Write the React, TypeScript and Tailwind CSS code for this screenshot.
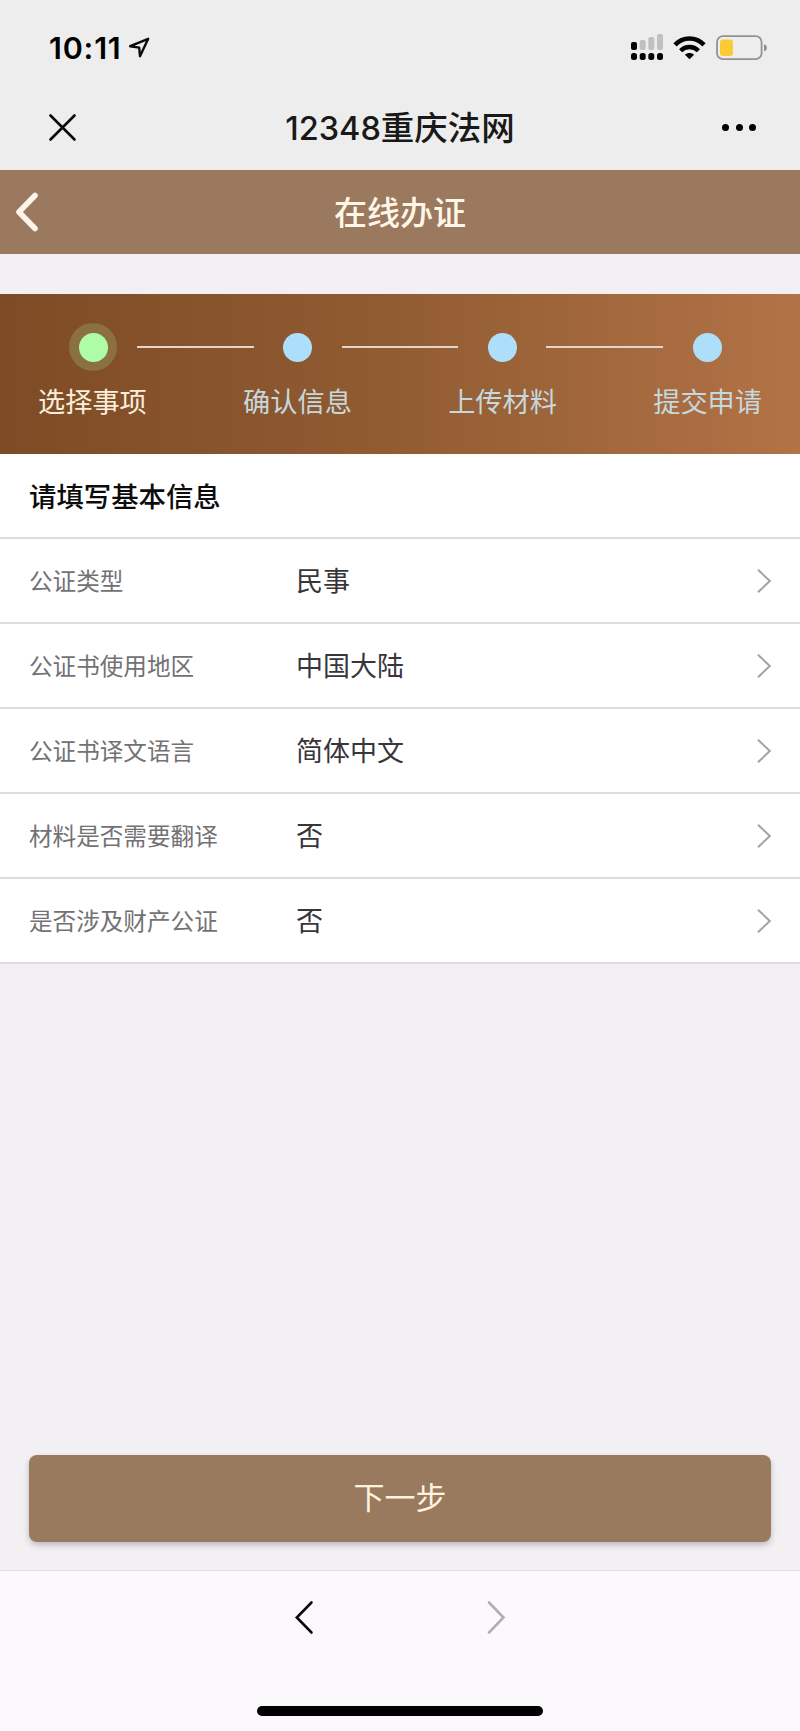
import React from 'react';

interface FormRowProps {
  label: string;
  value: string;
}

const steps = ['选择事项', '确认信息', '上传材料', '提交申请'];

const rows: FormRowProps[] = [
  { label: '公证类型', value: '民事' },
  { label: '公证书使用地区', value: '中国大陆' },
  { label: '公证书译文语言', value: '简体中文' },
  { label: '材料是否需要翻译', value: '否' },
  { label: '是否涉及财产公证', value: '否' },
];

function StatusBar() {
  return (
    <div className="flex h-[85px] items-center justify-between pl-[49px] pr-[32px]">
      <div className="flex items-center pt-[11px]">
        <span className="w-[74px] whitespace-nowrap text-[30.5px] leading-none font-semibold tracking-[0.8px] text-black">10:11</span>
        <svg className="ml-[5px]" width="22" height="22" viewBox="0 0 22 22" fill="none">
          <path d="M20.200 1.800 2.200 9.200l9 1.400.8 8.600z" stroke="#0a0a0a" strokeWidth="2.400" strokeLinejoin="round" />
        </svg>
      </div>
      <div className="flex items-center pt-[8px]">
        {/* dual sim signal */}
        <svg width="33" height="28" viewBox="0 0 33 28">
          <rect x="0" y="9" width="6" height="8" rx="2" fill="#050505" />
          <rect x="8.7" y="7" width="6" height="10" rx="2" fill="#c0c0c0" />
          <rect x="17.3" y="4" width="6" height="13" rx="2" fill="#c0c0c0" />
          <rect x="26" y="1" width="6" height="16" rx="2" fill="#c0c0c0" />
          <rect x="0" y="20" width="6" height="7" rx="2.5" fill="#050505" />
          <rect x="8.7" y="20" width="6" height="7" rx="2.5" fill="#050505" />
          <rect x="17.3" y="20" width="6" height="7" rx="2.5" fill="#050505" />
          <rect x="26" y="20" width="6" height="7" rx="2.5" fill="#050505" />
        </svg>
        <svg className="mt-[2px] ml-[9px]" width="33" height="24" viewBox="0 0 33 24" fill="none">
          <path d="M2 8.8C10 .4 23 .4 31 8.8" stroke="#050505" strokeWidth="4.6" />
          <path d="M7.6 14.8c5-5 12.800-5 17.800 0" stroke="#050505" strokeWidth="4.4" />
          <path d="M16.500 23.200l-4.600-4.400c2.600-2.300 6.600-2.300 9.200 0z" fill="#050505" />
        </svg>
        <svg className="mt-[2px] ml-[10px]" width="52" height="26" viewBox="0 0 52 26" fill="none">
          <rect x="1" y="1.200" width="44.600" height="23" rx="6" stroke="#929292" strokeWidth="1.800" />
          <rect x="4" y="4.500" width="13" height="16.500" rx="3" fill="#fbca35" />
          <path d="M48 9.200c3.800.8 3.800 6.200 0 7z" fill="#8c8c8c" />
        </svg>
      </div>
    </div>
  );
}

function NavBar() {
  return (
    <div className="flex h-[85px] items-center justify-between pl-[48px] pr-[44px]">
      <svg width="30" height="30" viewBox="0 0 30 30" fill="none">
        <path d="M2.500 2.500l24 24M26.500 2.500l-24 24" stroke="#0a0a0a" strokeWidth="2.600" strokeLinecap="round" />
      </svg>
      <h1 className="whitespace-nowrap pt-[2px] text-[33.500px] leading-none font-medium text-[#191919]">
        <span className="text-[32.500px]">12348</span>重庆法网
      </h1>
      <div className="flex gap-[6.500px]">
        <span className="size-[7px] rounded-full bg-black" />
        <span className="size-[7px] rounded-full bg-black" />
        <span className="size-[7px] rounded-full bg-black" />
      </div>
    </div>
  );
}

function StepBar() {
  return (
    <div className="flex h-[160px] flex-col bg-linear-to-r from-[#7d4b25] via-[#925c32] to-[#b27346] pt-[29px]">
      <div className="flex items-center px-[69px]">
        {steps.map((step, index) => (
          <React.Fragment key={step}>
            {index > 0 && <span className="mx-5 h-[2px] flex-1 bg-[#e3d5cb]" />}
            <span className={`flex size-12 items-center justify-center rounded-full ${index === 0 ? 'bg-[#8b7041]' : ''}`}>
              <span className={`size-[29px] rounded-full ${index === 0 ? 'bg-[#aefda6]' : 'bg-[#addffb]'}`} />
            </span>
          </React.Fragment>
        ))}
      </div>
      <div className="mt-[12px] flex justify-between px-[38px]">
        {steps.map((step, index) => (
          <span key={step} className={`text-[27.200px] leading-[40px] ${index === 0 ? 'text-[#fbefdc]' : 'text-[#c5d8df]'}`}>
            {step}
          </span>
        ))}
      </div>
    </div>
  );
}

function FormRow({ label, value }: FormRowProps) {
  return (
    <div className="flex h-[85px] items-center border-b-2 border-[#dcdcdd] pl-[29px] pr-[28px]">
      <span className="w-[267px] pt-[2px] text-[23.600px] text-[#737174]">{label}</span>
      <span className="flex-1 pt-[3px] text-[27px] text-[#38363a]">{value}</span>
      <svg width="16" height="26" viewBox="0 0 16 26" fill="none">
        <path d="M2 1.800 13.800 13 2 24.200" stroke="#a3a1a4" strokeWidth="2" />
      </svg>
    </div>
  );
}

function App() {
  return (
    <div className="flex h-[1731px] w-[800px] flex-col bg-[#f2f0f3] font-[Inter,'Noto_Sans_CJK_SC',sans-serif]">
      <header className="bg-[#ededed]">
        <StatusBar />
        <NavBar />
      </header>

      <div className="flex h-[84px] items-center bg-[#9a795f] px-[14px]">
        <svg width="26" height="42" viewBox="0 0 26 42" fill="none">
          <path d="M21 4.500 5 21l16 16.500" stroke="#fff4ea" strokeWidth="5.600" strokeLinecap="round" strokeLinejoin="round" />
        </svg>
        <h2 className="flex-1 pt-[2px] pr-[26px] text-center text-[33px] leading-none font-medium text-[#fff6e8]">在线办证</h2>
      </div>

      <div className="mt-[40px]">
        <StepBar />
      </div>

      <div className="bg-white">
        <div className="flex h-[85px] items-center border-b-2 border-[#dcdcdd] px-[29px] pt-[5px] text-[27.400px] font-medium text-[#0c0c0c]">
          请填写基本信息
        </div>
        {rows.map((row) => (
          <FormRow key={row.label} label={row.label} value={row.value} />
        ))}
      </div>

      <div className="mt-auto px-[29px] pb-[28px]">
        <button className="block h-[87px] w-full rounded-[8px] bg-[#997a5e] text-[31px] text-[#fff3df] shadow-[0_3px_6px_rgba(0,0,0,0.22)]">
          下一步
        </button>
      </div>

      <footer className="flex h-[161px] flex-col items-center border-t border-[#e2e0e3] bg-[#fbf9fc]">
        <div className="mt-[29px] flex gap-[172px]">
          <svg width="20" height="36" viewBox="0 0 20 36" fill="none">
            <path d="M17.500 2.500 2.800 17.500l14.700 15" stroke="#0a0a0a" strokeWidth="2.600" strokeLinecap="round" />
          </svg>
          <svg width="20" height="36" viewBox="0 0 20 36" fill="none">
            <path d="M3 2.500l14.500 15L3 32.500" stroke="#b0aeb1" strokeWidth="2.600" strokeLinecap="round" />
          </svg>
        </div>
        <div className="mt-auto mb-[15px] h-[10px] w-[286px] rounded-full bg-black" />
      </footer>
    </div>
  );
}

export default App;
